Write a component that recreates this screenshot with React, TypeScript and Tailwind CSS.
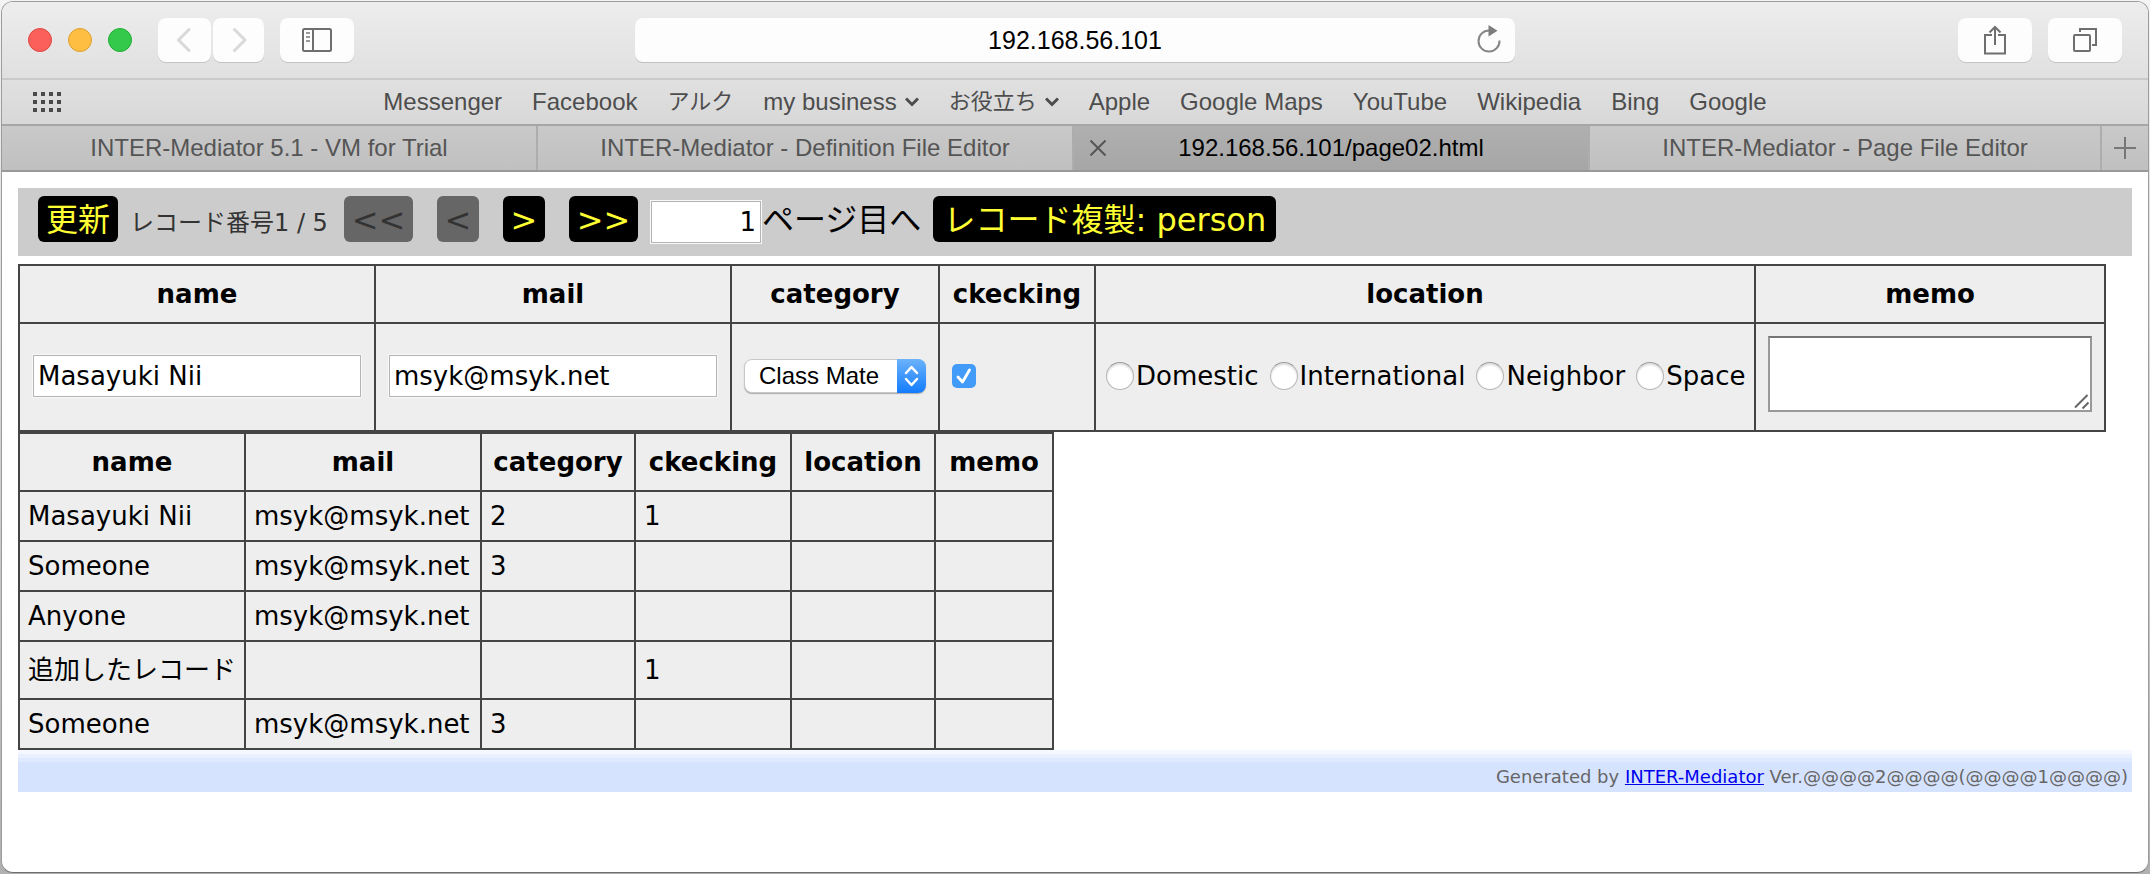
import type { ReactNode } from "react";

const bookmarks: { label: string; menu?: boolean; ja?: boolean }[] = [
  { label: "Messenger" },
  { label: "Facebook" },
  { label: "アルク", ja: true },
  { label: "my business", menu: true },
  { label: "お役立ち", menu: true, ja: true },
  { label: "Apple" },
  { label: "Google Maps" },
  { label: "YouTube" },
  { label: "Wikipedia" },
  { label: "Bing" },
  { label: "Google" },
];

const columns = ["name", "mail", "category", "ckecking", "location", "memo"];

const records = [
  ["Masayuki Nii", "msyk@msyk.net", "2", "1", "", ""],
  ["Someone", "msyk@msyk.net", "3", "", "", ""],
  ["Anyone", "msyk@msyk.net", "", "", "", ""],
  ["追加したレコード", "", "", "1", "", ""],
  ["Someone", "msyk@msyk.net", "3", "", "", ""],
];

const locations = ["Domestic", "International", "Neighbor", "Space"];

function ToolButton({ label, className, children }: { label: string; className: string; children: ReactNode }) {
  return (
    <button
      type="button"
      aria-label={label}
      className={`flex h-11 shrink-0 items-center justify-center rounded-lg bg-[#fdfdfd] shadow-[0_1px_0_#c4c4c4] ${className}`}
    >
      {children}
    </button>
  );
}

function TitleBar() {
  return (
    <div className="grid grid-cols-[1fr_minmax(0,880px)_1fr] items-center border-b-2 border-[#c9c9c9] bg-linear-to-b from-[#ededed] to-[#e0e0e0] py-4">
      <div className="flex items-center pl-[26px]">
        <div className="mr-[26px] flex gap-4">
          <button type="button" aria-label="Close window" className="size-6 rounded-full border border-[#e2463f] bg-[#fc605b]" />
          <button type="button" aria-label="Minimize window" className="size-6 rounded-full border border-[#e0a032] bg-[#fdbe41]" />
          <button type="button" aria-label="Zoom window" className="size-6 rounded-full border border-[#22ad33] bg-[#34c94a]" />
        </div>
        <ToolButton label="Back" className="mr-0.5 w-[53px]">
          <svg width="16" height="26" viewBox="0 0 16 26" fill="none" stroke="#d9d9d9" strokeWidth="3" strokeLinecap="round" strokeLinejoin="round">
            <path d="M12 2.500 1.500 13 12 23.500" />
          </svg>
        </ToolButton>
        <ToolButton label="Forward" className="mr-4 w-[51px]">
          <svg width="16" height="26" viewBox="0 0 16 26" fill="none" stroke="#d9d9d9" strokeWidth="3" strokeLinecap="round" strokeLinejoin="round">
            <path d="M3.500 2.500 14 13 3.500 23.500" />
          </svg>
        </ToolButton>
        <ToolButton label="Show sidebar" className="w-[74px]">
          <svg width="30" height="24" viewBox="0 0 30 24" fill="none" stroke="#6f6f6f" strokeWidth="2">
            <rect x="1" y="1" width="28" height="22" rx="1.5" />
            <path d="M11 1v22" />
            <path stroke="#9a9a9a" d="M4 5h4M4 9h4M4 13h4" />
          </svg>
        </ToolButton>
      </div>
      <div className="flex h-11 items-center rounded-lg bg-[#fdfdfd] pr-3 pl-10 shadow-[0_1px_0_#bfc2bf]">
        <input
          aria-label="Address"
          defaultValue="192.168.56.101"
          className="min-w-0 flex-1 bg-transparent text-center text-[25px] leading-8 text-black outline-none"
        />
        <button type="button" aria-label="Reload">
          <svg width="28" height="30" viewBox="0 0 28 30" fill="none">
            <path d="M24.5 15.5A10.5 10.5 0 1 1 14 5.500" stroke="#858585" strokeWidth="2" />
            <path d="M13.500 0v11.500l9-5.700z" fill="#7d7d7d" />
          </svg>
        </button>
      </div>
      <div className="flex justify-end gap-4 pr-[26px]">
        <ToolButton label="Share" className="w-[74px]">
          <svg width="24" height="32" viewBox="0 0 24 32" fill="none" stroke="#6f6f6f" strokeWidth="2">
            <path d="M9 11H2v18.500h20V11h-7M12 2.500V21M6.500 8.500 12 3l5.500 5.500" />
          </svg>
        </ToolButton>
        <ToolButton label="Show all tabs" className="w-[74px]">
          <svg width="26" height="26" viewBox="0 0 26 26" fill="none" stroke="#6f6f6f" strokeWidth="2">
            <rect x="2" y="8" width="16" height="16" rx="1" />
            <path d="M8 5V2h16v16h-4" />
          </svg>
        </ToolButton>
      </div>
    </div>
  );
}

function BookmarksBar() {
  return (
    <div className="grid grid-cols-[1fr_auto_1fr] items-center border-b-2 border-[#a6a6a6] bg-linear-to-b from-[#e0e0e0] to-[#d8d8d8]">
      <button type="button" aria-label="Top sites" className="ml-[31px] w-fit">
        <svg width="28" height="20" viewBox="0 0 28 20" fill="#4a4a4a">
          {[0, 8, 16].map((y) => [0, 8, 16, 24].map((x) => <rect key={`${x}-${y}`} x={x} y={y} width="4" height="4" />))}
        </svg>
      </button>
      <nav className="flex gap-[30px] leading-[44px] text-[#4d4d4d]">
        {bookmarks.map((b) => (
          <a key={b.label} href="#" className={`flex items-center gap-2 whitespace-nowrap ${b.ja ? "text-[22px]" : "text-[24px]"}`}>
            {b.label}
            {b.menu && (
              <svg width="14" height="10" viewBox="0 0 14 10" fill="none" stroke="#4d4d4d" strokeWidth="3">
                <path d="m1 1.500 6 6 6-6" />
              </svg>
            )}
          </a>
        ))}
      </nav>
      <span />
    </div>
  );
}

const tabStyle =
  "flex h-11 items-center justify-center border-r-2 border-[#adadad] bg-linear-to-b from-[#c9c9c9] to-[#c0c0c0] text-[#555]";

function TabBar() {
  return (
    <div className="grid grid-cols-[536fr_536fr_516fr_512fr_46px] border-b-2 border-[#999] text-[24px] leading-[44px] whitespace-nowrap">
      <button type="button" className={tabStyle}>INTER-Mediator 5.1 - VM for Trial</button>
      <button type="button" className={tabStyle}>INTER-Mediator - Definition File Editor</button>
      <div className="flex h-11 items-center border-r-2 border-[#adadad] bg-linear-to-b from-[#b0b0b0] to-[#a6a6a6] px-4 text-black">
        <button type="button" aria-label="Close tab">
          <svg width="16" height="16" viewBox="0 0 16 16" stroke="#555" strokeWidth="2">
            <path d="m0.500 0.500 15 15m0-15-15 15" />
          </svg>
        </button>
        <button type="button" className="flex-1 pr-4">192.168.56.101/page02.html</button>
      </div>
      <button type="button" className={tabStyle}>INTER-Mediator - Page File Editor</button>
      <button type="button" aria-label="New tab" className="flex h-11 items-center justify-center bg-linear-to-b from-[#c9c9c9] to-[#c0c0c0]">
        <svg width="22" height="22" viewBox="0 0 22 22" stroke="#777" strokeWidth="2">
          <path d="M11 0v22M0 11h22" />
        </svg>
      </button>
    </div>
  );
}

const navButton = "h-[46px] rounded-md text-center text-[32px] leading-[48px] whitespace-nowrap";
const activeButton = `${navButton} bg-black text-[#ffff33]`;
const disabledButton = `${navButton} bg-[#666] text-[#333]`;
const textBox = "h-11 border border-[#f8f8f8] bg-white px-[5px] text-[26px] leading-9 text-black outline-none inset-ring inset-ring-[#b4b4b4]";

function Navigation() {
  return (
    <div className="flex items-baseline gap-3 bg-[#ccc] px-5 pt-2 pb-3 text-[32px] leading-[46px] whitespace-nowrap">
      <button type="button" className={`${activeButton} w-20`}>更新</button>
      <span className="w-[202px] text-2xl text-[#333]">レコード番号1 / 5</span>
      <div className="flex items-baseline gap-6">
        <button type="button" disabled className={`${disabledButton} w-[69px]`}>&lt;&lt;</button>
        <button type="button" disabled className={`${disabledButton} w-[42px]`}>&lt;</button>
        <button type="button" className={`${activeButton} w-[42px]`}>&gt;</button>
        <button type="button" className={`${activeButton} w-[69px]`}>&gt;&gt;</button>
      </div>
      <label className="flex items-baseline">
        <input defaultValue="1" className={`${textBox} w-28 text-right`} />
        ページ目へ
      </label>
      <button type="button" className={`${activeButton} w-[343px]`}>レコード複製: person</button>
    </div>
  );
}

const cell = "border-2 border-[#444] bg-[#eee]";

function HeaderRow() {
  return (
    <tr className="h-[58px]">
      {columns.map((name) => (
        <th key={name} className={`${cell} px-1 font-bold`}>{name}</th>
      ))}
    </tr>
  );
}

function EditTable() {
  return (
    <table className="border-collapse">
      <colgroup>
        <col className="w-[356px]" />
        <col className="w-[356px]" />
        <col className="w-[208px]" />
        <col className="w-[156px]" />
        <col className="w-[660px]" />
        <col className="w-[350px]" />
      </colgroup>
      <thead>
        <HeaderRow />
      </thead>
      <tbody>
        <tr className="h-[108px]">
          <td className={`${cell} px-3 pb-0.5`}>
            <input aria-label="name" defaultValue="Masayuki Nii" className={`${textBox} block w-[330px]`} />
          </td>
          <td className={`${cell} px-3 pb-0.5`}>
            <input aria-label="mail" defaultValue="msyk@msyk.net" className={`${textBox} block w-[330px]`} />
          </td>
          <td className={`${cell} px-3 pb-0.5`}>
            <div className="relative w-[182px]">
              <select
                aria-label="category"
                className="block h-[34px] w-full appearance-none rounded-lg border border-[#c8c8c8] bg-white pl-3.5 font-['Liberation_Sans',sans-serif] text-[24px] leading-8 text-black shadow-[0_1px_1px_#aaa]"
              >
                <option>Class Mate</option>
              </select>
              <svg className="pointer-events-none absolute top-0 right-0" width="29" height="34" viewBox="0 0 29 34" fill="none">
                <defs>
                  <linearGradient id="stepper" x1="0" y1="0" x2="0" y2="1">
                    <stop offset="0" stopColor="#6cb3fa" />
                    <stop offset="1" stopColor="#137cfe" />
                  </linearGradient>
                </defs>
                <path d="M0 0h21a8 8 0 0 1 8 8v18a8 8 0 0 1-8 8H0z" fill="url(#stepper)" />
                <path d="m9 14 5.500-6 5.500 6M9 20l5.500 6 5.500-6" stroke="#fff" strokeWidth="2.500" strokeLinecap="round" strokeLinejoin="round" />
              </svg>
            </div>
          </td>
          <td className={`${cell} px-3 pb-0.5`}>
            <div className="relative size-6">
              <input type="checkbox" aria-label="ckecking" defaultChecked className="block size-6 appearance-none rounded-[5px] bg-[#429bf9]" />
              <svg className="pointer-events-none absolute inset-0" width="24" height="24" viewBox="0 0 24 24" fill="none" stroke="#fff" strokeWidth="2.800" strokeLinecap="round" strokeLinejoin="round">
                <path d="m6 13 4.500 5L17.500 6" />
              </svg>
            </div>
          </td>
          <td className={`${cell} px-2 pb-0.5`}>
            <div className="flex gap-[11px] pl-0.5">
              {locations.map((name) => (
                <label key={name} className="flex items-center gap-0.5">
                  <input
                    type="radio"
                    name="location"
                    className="size-7 appearance-none rounded-full border border-[#b5b5b5] border-t-[#9a9a9a] bg-white shadow-[inset_0_2px_2px_#ddd]"
                  />
                  {name}
                </label>
              ))}
            </div>
          </td>
          <td className={`${cell} px-3 pt-3 pb-[18px]`}>
            <div className="relative w-[324px]">
              <textarea
                aria-label="memo"
                className="block h-[76px] w-full resize-none border-2 border-[#999] border-t-[#757575] bg-white p-1 outline-none"
              />
              <svg className="pointer-events-none absolute right-0.5 bottom-0.5" width="16" height="16" viewBox="0 0 16 16" stroke="#666" strokeWidth="2">
                <path d="M1 13.500 13.500 1M8.500 14.500l6-6" />
              </svg>
            </div>
          </td>
        </tr>
      </tbody>
    </table>
  );
}

function ListTable() {
  return (
    <table className="border-collapse">
      <colgroup>
        <col className="w-[226px]" />
        <col className="w-[236px]" />
        <col className="w-[154px]" />
        <col className="w-[156px]" />
        <col className="w-[144px]" />
        <col className="w-[118px]" />
      </colgroup>
      <thead>
        <HeaderRow />
      </thead>
      <tbody>
        {records.map((record, i) => (
          <tr key={i} className={record[0] === "追加したレコード" ? "h-[58px]" : "h-[50px]"}>
            {record.map((value, j) => (
              <td key={j} className={`${cell} pr-1 pl-2 whitespace-nowrap`}>{value}</td>
            ))}
          </tr>
        ))}
      </tbody>
    </table>
  );
}

export default function App() {
  return (
    <div className="flex min-h-screen bg-linear-to-b from-[#f4f4f4] to-[#b0b0b0] p-px font-['Liberation_Sans','Noto_Sans_CJK_JP',sans-serif]">
      <div className="flex min-w-0 flex-1 flex-col overflow-hidden rounded-xl border border-[#9c9c9c] border-b-[#6e6e6e] bg-white">
        <TitleBar />
        <BookmarksBar />
        <TabBar />
        <main className="flex-1 overflow-x-auto p-4 font-['DejaVu_Sans','Noto_Sans_CJK_JP',sans-serif] text-[26px] leading-8 text-black">
          <Navigation />
          <div className="pt-2">
            <EditTable />
            <ListTable />
          </div>
          <footer className="bg-[linear-gradient(#f5f8ff_0_4px,#e9f0ff_4px_8px,#dfe9ff_8px_12px,#d6e3fe_12px)] px-1 pt-3.5 pb-0.5 text-right text-lg leading-[26px] text-[#666]">
            Generated by <a href="#" className="text-[#0000ee] underline">INTER-Mediator</a> Ver.@@@@2@@@@(@@@@1@@@@)
          </footer>
        </main>
      </div>
    </div>
  );
}
